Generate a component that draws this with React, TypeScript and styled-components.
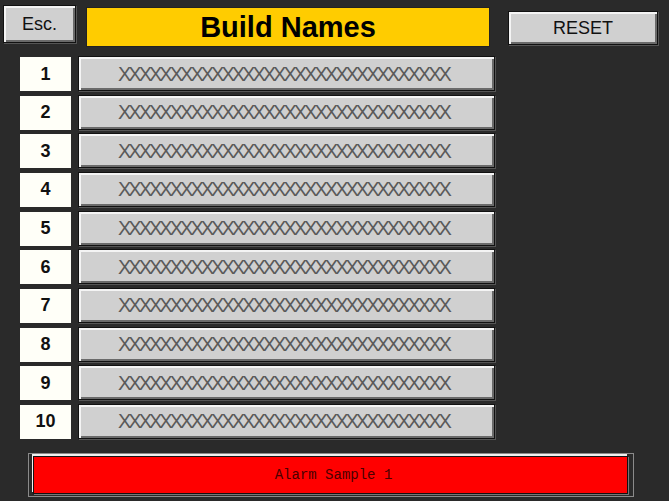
import React from "react";
import styled, { createGlobalStyle } from "styled-components";

const GlobalStyle = createGlobalStyle`
  html, body {
    margin: 0;
    padding: 0;
    background: #2a2a2a;
  }
`;

const Screen = styled.div`
  width: 669px;
  height: 501px;
  background: #2a2a2a;
  font-family: "Liberation Sans", Arial, sans-serif;
  box-sizing: border-box;
  overflow: hidden;
`;

const TopBar = styled.div`
  display: flex;
  align-items: flex-start;
  padding: 0 0 0 3px;
  height: 50px;
`;

const BevelButton = styled.div<{ $w: number; $h: number; $top: number; $left: number }>`
  box-sizing: border-box;
  width: ${(p) => p.$w}px;
  height: ${(p) => p.$h}px;
  margin-top: ${(p) => p.$top}px;
  margin-left: ${(p) => p.$left}px;
  background: #d0d0d0;
  border: 1px solid #111;
  box-shadow: inset 2px 2px 0 #f4f4f4, inset -2px -2px 0 #6a6a6a, 1px 1px 0 #555;
  display: flex;
  align-items: center;
  justify-content: center;
  font-size: 18px;
  color: #111;
`;

const Title = styled.div`
  box-sizing: border-box;
  width: 404px;
  height: 40px;
  margin-top: 7px;
  margin-left: 10px;
  background: #ffcc00;
  border: 1px solid #222;
  display: flex;
  align-items: center;
  justify-content: center;
  font-size: 29px;
  font-weight: bold;
  color: #000;
`;

const List = styled.div`
  display: grid;
  grid-template-columns: 51px 417px;
  grid-auto-rows: 34px;
  column-gap: 7px;
  row-gap: 4.67px;
  padding: 7px 0 0 20px;
`;

const NumBox = styled.div`
  background: #fffff8;
  display: flex;
  align-items: center;
  justify-content: center;
  font-size: 18px;
  font-weight: bold;
  color: #111;
`;

const NameField = styled.div`
  box-sizing: border-box;
  height: 35px;
  margin-top: -1px;
  background: #d0d0d0;
  border: 1px solid #111;
  box-shadow: inset 2px 2px 0 #f4f4f4, inset -2px -2px 0 #6a6a6a, 1px 1px 0 #555;
  display: flex;
  align-items: center;
  padding-left: 39px;
  overflow: hidden;
`;

const Pattern = styled.span`
  font-family: "Liberation Sans", Arial, sans-serif;
  font-size: 20px;
  letter-spacing: -3px;
  color: #5a5a5a;
  white-space: nowrap;
  line-height: 1;
`;

const AlarmFrame = styled.div`
  box-sizing: border-box;
  width: 606px;
  height: 44px;
  margin: 14px 0 0 28px;
  border: 1px solid #8a8a8a;
  background: #2a2a2a;
  padding: 2px 5px 2px 4px;
  display: flex;
`;

const AlarmBar = styled.div`
  flex: 1;
  background: #ff0000;
  border: 1px solid #111;
  box-shadow: -1px -2px 0 #f0f0f0, 1px 1px 0 #777;
  display: flex;
  align-items: center;
  justify-content: center;
  font-family: "Liberation Mono", "DejaVu Sans Mono", monospace;
  font-size: 14px;
  color: #4a0000;
  padding-left: 6px;
`;

const pattern = "X".repeat(32);

export default function App() {
  return (
    <Screen>
      <GlobalStyle />
      <TopBar>
        <BevelButton $w={73} $h={38} $top={5} $left={0}>
          Esc.
        </BevelButton>
        <Title>Build Names</Title>
        <BevelButton $w={150} $h={34} $top={11} $left={18}>
          RESET
        </BevelButton>
      </TopBar>
      <List>
        {Array.from({ length: 10 }, (_, i) => (
          <React.Fragment key={i}>
            <NumBox>{i + 1}</NumBox>
            <NameField>
              <Pattern>{pattern}</Pattern>
            </NameField>
          </React.Fragment>
        ))}
      </List>
      <AlarmFrame>
        <AlarmBar>Alarm Sample 1</AlarmBar>
      </AlarmFrame>
    </Screen>
  );
}
